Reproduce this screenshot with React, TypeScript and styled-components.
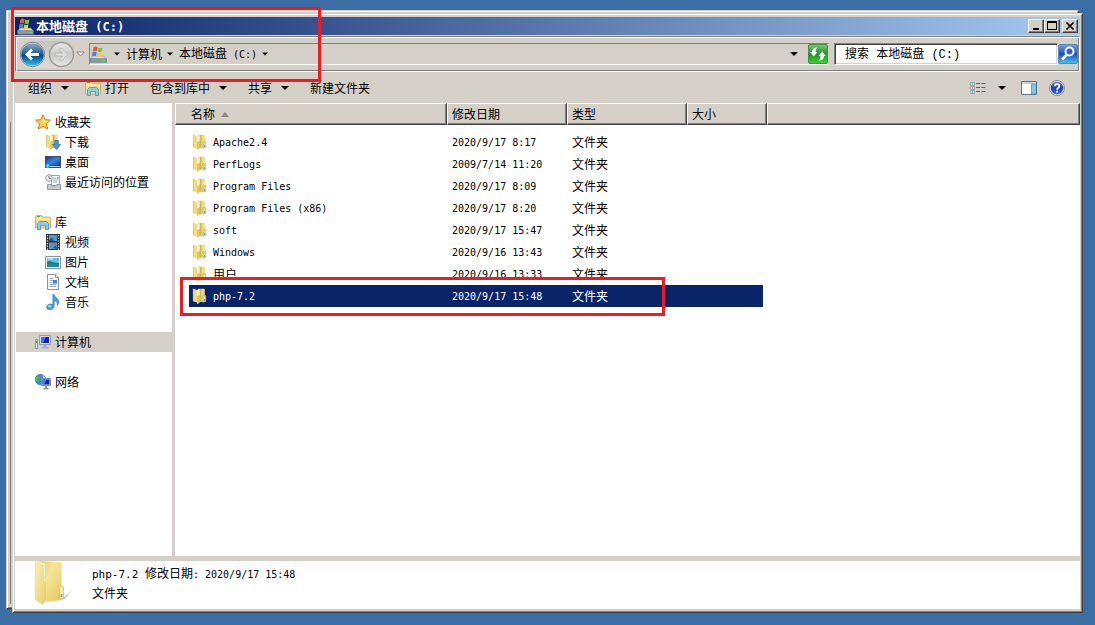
import React from "react";
import styled, { createGlobalStyle, css } from "styled-components";

const FACE = "#d4d0c8";
const NAVY = "#0a246a";
const MARK = "#ed1c24";

const GlobalStyle = createGlobalStyle`
  * { box-sizing: border-box; }
  body {
    margin: 0;
    background: #3a6ea5;
    color: #000;
    font: 12px/20px "Noto Sans CJK SC", sans-serif;
  }
  button, input {
    font: inherit;
    color: inherit;
    border: 0;
    padding: 0;
    margin: 0;
    background: none;
    border-radius: 0;
  }
  svg { display: block; flex: none; }
`;

const raised = css`
  border: 1px solid;
  border-color: #fff #404040 #404040 #fff;
  box-shadow: inset -1px -1px #808080;
`;

const Desktop = styled.div`
  position: relative;
  height: 100vh;
  min-height: 480px;
  padding: 13px 12px 12px;
  display: flex;
`;

const BackWindow = styled.div`
  position: absolute;
  inset: 10px 16px 16px 6px;
  background: ${FACE};
  border: 1px solid;
  border-color: ${FACE} #404040 #404040 ${FACE};
  box-shadow: inset 1px 1px #fff, inset -1px -1px #808080;
  &::before {
    content: "";
    position: absolute;
    left: 3px;
    top: 111px;
    bottom: 4px;
    border-left: 1px solid #808080;
  }
`;

const Window = styled.main`
  position: relative;
  flex: 1;
  min-width: 0;
  display: flex;
  flex-direction: column;
  padding: 3px 2px;
  background: ${FACE};
  border: 1px solid;
  border-color: ${FACE} #404040 #404040 ${FACE};
  box-shadow: inset 1px 1px #fff, inset -1px -1px #808080;
`;

const TitleBar = styled.header`
  height: 18px;
  flex: none;
  display: flex;
  align-items: center;
  gap: 2px;
  padding: 0 2px;
  background: linear-gradient(90deg, ${NAVY}, #a6caf0);
  color: #fff;
`;

const Title = styled.h1`
  flex: 1;
  margin: 0;
  font-size: 13px;
  line-height: 18px;
  font-weight: 700;
`;

const Latin = styled.span<{ $size?: number }>`
  font-family: "DejaVu Sans Mono", monospace;
  font-size: ${(p) => p.$size ?? 10}px;
  white-space: pre;
`;

const CaptionButtons = styled.div`
  display: flex;
`;

const CaptionButton = styled.button<{ $apart?: boolean }>`
  ${raised}
  width: 16px;
  height: 14px;
  display: grid;
  place-items: center;
  background: ${FACE};
  margin-left: ${(p) => (p.$apart ? 2 : 0)}px;
`;

const NavBar = styled.nav`
  flex: none;
  height: 36px;
  margin-top: 1px;
  display: flex;
  align-items: center;
  padding-left: 3px;
  border: 1px solid #808080;
  border-right-color: #fff;
  border-bottom-color: #fff;
  box-shadow: inset 1px 1px #fff, inset -1px -1px #808080;
`;

const HistoryButtons = styled.div`
  display: flex;
  align-items: center;
  gap: 2px;
  border-radius: 14px;
  background: linear-gradient(#c6c4bd, #dedbd4);
`;

const PlainButton = styled.button`
  display: flex;
  align-items: center;
  flex: none;
`;

const HistoryMenu = styled(PlainButton)`
  margin: 0 4px 0 1px;
`;

const AddressBar = styled.div`
  flex: 1;
  min-width: 0;
  height: 22px;
  display: flex;
  align-items: center;
  border: 1px solid;
  border-color: #808080 ${FACE} #fff #808080;
`;

const Crumbs = styled.ol`
  flex: 1;
  display: flex;
  align-items: center;
  gap: 6px;
  margin: 0;
  padding: 0 0 0 7px;
  list-style: none;
  li {
    display: flex;
    align-items: center;
    gap: 5px;
  }
`;

const AddressMenu = styled(PlainButton)`
  margin-right: 10px;
`;

const SearchBox = styled.form`
  width: 244px;
  margin: 0 1px 0 5px;
  display: flex;
  align-items: center;
`;

const SearchInput = styled.input`
  flex: 1;
  min-width: 0;
  height: 22px;
  padding: 2px 10px 0;
  background: #fff;
  border: 1px solid;
  border-color: #808080 #fff #fff #808080;
  box-shadow: inset 1px 1px #404040, inset -1px -1px ${FACE};
  font-family: "Liberation Mono", "Noto Sans CJK SC", monospace;
  &::placeholder {
    color: #000;
    opacity: 1;
  }
`;

const Toolbar = styled.div`
  flex: none;
  height: 31px;
  display: flex;
  align-items: center;
  justify-content: space-between;
  padding: 0 15px 0 13px;
`;

const ToolGroup = styled.div<{ $gap: number }>`
  display: flex;
  align-items: center;
  gap: ${(p) => p.$gap}px;
`;

const ToolButton = styled(PlainButton)<{ $gap?: number }>`
  gap: ${(p) => p.$gap ?? 9}px;
`;

const Body = styled.div`
  flex: 1;
  min-height: 0;
  display: flex;
  gap: 3px;
`;

const Sidebar = styled.aside`
  flex: none;
  width: 157px;
  padding: 9px 0 0 1px;
  background: #fff;
  display: flex;
  flex-direction: column;
  gap: 20px;
  overflow: hidden;
`;

const TreeGroup = styled.div``;

const TreeLink = styled.a<{ $child?: boolean; $active?: boolean }>`
  display: flex;
  align-items: center;
  gap: 4px;
  height: 20px;
  padding-left: ${(p) => (p.$child ? 29 : 19)}px;
  background: ${(p) => (p.$active ? FACE : "transparent")};
  color: inherit;
  text-decoration: none;
`;

const FilePane = styled.section`
  flex: 1;
  min-width: 0;
  background: #fff;
  overflow: hidden;
`;

const FileTable = styled.table`
  width: 100%;
  table-layout: fixed;
  border-collapse: separate;
  border-spacing: 0;
  tbody::before {
    content: "";
    display: table-row;
    height: 6px;
  }
`;

const HeadCell = styled.th<{ $w?: number; $first?: boolean }>`
  ${raised}
  width: ${(p) => (p.$w ? p.$w + "px" : "auto")};
  height: 22px;
  padding: 0 0 0 ${(p) => (p.$first ? 15 : 4)}px;
  background: ${FACE};
  font-weight: 400;
  text-align: left;
  line-height: 18px;
`;

const SortButton = styled(PlainButton)`
  gap: 6px;
  height: 18px;
`;

const FileRow = styled.tr<{ $selected?: boolean }>`
  td {
    height: 22px;
    padding: 0 0 0 5px;
    white-space: nowrap;
    background-clip: padding-box;
    background-color: ${(p) => (p.$selected ? NAVY : "transparent")};
    color: ${(p) => (p.$selected ? "#fff" : "#000")};
  }
  td:first-child {
    border-left: 14px solid transparent;
    padding-left: 3px;
  }
  td:nth-child(4) {
    border-right: 4px solid transparent;
  }
  td:last-child {
    background: none;
  }
`;

const FileName = styled.div`
  display: flex;
  align-items: center;
  gap: 5px;
`;

const Details = styled.footer`
  flex: none;
  height: 48px;
  margin-top: 5px;
  padding-left: 20px;
  display: flex;
  gap: 19px;
  background: #fff;
`;

const DetailText = styled.div`
  padding-top: 3px;
  line-height: 18px;
  p { margin: 0; }
`;

const Highlight = styled.div<{ $x: number; $y: number; $w: number; $h: number }>`
  position: absolute;
  left: ${(p) => p.$x}px;
  top: ${(p) => p.$y}px;
  width: ${(p) => p.$w}px;
  height: ${(p) => p.$h}px;
  border: 3px solid ${MARK};
  pointer-events: none;
`;

const Caret = ({ size = 8 }: { size?: number }) => (
  <svg width={size} height="8" viewBox={`0 0 ${size} 8`} aria-hidden="true">
    <path d={size === 6 ? "M0 2.500H6L3 5.500Z" : "M0 2H8L4 6Z"} fill="#000" />
  </svg>
);

const DriveIcon = () => (
  <svg width="17" height="17" viewBox="0 0 16 16">
    <path d="M3 9.500h10l2.500 3H.5z" fill="#d5dde2" stroke="#8b9aa4" strokeWidth=".6" />
    <path d="M.5 12h15v3.300H.5z" fill="#8d9da8" stroke="#62727d" strokeWidth=".6" />
    <path d="M11.500 13h2.500v1.200h-2.500z" fill="#49e34d" />
    <path d="M3.300 1.200C4.800.2 6 .3 7.200 1L6.500 4.900C5.200 4.200 4 4.200 2.600 5z" fill="#ee5a2c" />
    <path d="M7.800 1.300c1.300.8 2.500.8 4 .1L11 5.300c-1.300.6-2.500.6-3.900-.2z" fill="#84bd3a" />
    <path d="M2.400 5.700c1.400-.8 2.600-.7 3.900 0l-.7 4c-1.300-.7-2.500-.7-3.900.1z" fill="#3f86dc" />
    <path d="M6.900 6c1.400.8 2.600.8 3.900.2l-.8 4c-1.300.6-2.500.5-3.800-.2z" fill="#fdc92d" />
  </svg>
);

const BackIcon = () => (
  <svg width="27" height="27" viewBox="0 0 27 27">
    <defs>
      <linearGradient id="back" x2="0" y2="1">
        <stop offset="0" stopColor="#8fa9c4" />
        <stop offset=".46" stopColor="#2a5f96" />
        <stop offset=".54" stopColor="#06477f" />
        <stop offset="1" stopColor="#2cc4f5" />
      </linearGradient>
    </defs>
    <circle cx="13.500" cy="13.500" r="12.200" fill="#e8eef2" stroke="#7d8790" />
    <circle cx="13.500" cy="13.500" r="11.300" fill="url(#back)" />
    <path d="M20 13.500H8.500M13 8.500l-5 5 5 5" fill="none" stroke="#fff" strokeWidth="2.800" />
  </svg>
);

const ForwardIcon = () => (
  <svg width="27" height="27" viewBox="0 0 27 27">
    <defs>
      <linearGradient id="fwd" x2="0" y2="1">
        <stop offset="0" stopColor="#e8e7e4" />
        <stop offset=".5" stopColor="#cbc9c5" />
        <stop offset="1" stopColor="#e9e8e4" />
      </linearGradient>
    </defs>
    <circle cx="13.500" cy="13.500" r="12" fill="url(#fwd)" stroke="#9a9a98" strokeWidth="1.500" />
    <path d="M7 12h7.500L11 8.500 13.500 7l6.500 6.500-6.500 6.500-2.500-1.500 3.500-3.500H7z" fill="#dddcd8" stroke="#b3b2af" strokeWidth=".8" />
  </svg>
);

const RefreshIcon = () => (
  <svg width="20" height="20" viewBox="0 0 20 20">
    <defs>
      <linearGradient id="ref" x2="0" y2="1">
        <stop offset="0" stopColor="#7cc77a" />
        <stop offset=".5" stopColor="#18961c" />
        <stop offset="1" stopColor="#3fd23a" />
      </linearGradient>
    </defs>
    <rect x=".5" y=".5" width="19" height="19" rx="1.500" fill="url(#ref)" stroke="#4c8d50" />
    <path d="M9.500 3.500C6 3.500 4 5 4 8H2l3.800 4.500L9.500 8h-2c0-2 .5-3.500 2-4.500z" fill="#fff" />
    <path d="M10.500 16.500c3.500 0 5.500-1.500 5.500-4.500h2l-3.800-4.500L10.500 12h2c0 2-.5 3.500-2 4.500z" fill="#fff" />
  </svg>
);

const SearchIcon = () => (
  <svg width="20" height="20" viewBox="0 0 20 20">
    <defs>
      <linearGradient id="sea" x2="0" y2="1">
        <stop offset="0" stopColor="#7a9fe4" />
        <stop offset=".5" stopColor="#1d4fc4" />
        <stop offset="1" stopColor="#45c6f6" />
      </linearGradient>
    </defs>
    <rect x=".5" y=".5" width="19" height="19" rx="1.500" fill="url(#sea)" stroke="#5f84b8" />
    <circle cx="11.500" cy="7.500" r="4" fill="#2c63cc" stroke="#fff" strokeWidth="2" />
    <path d="M8.500 11 4 15.500" stroke="#fff" strokeWidth="2.600" />
  </svg>
);

const LibraryIcon = () => (
  <svg width="16" height="16" viewBox="0 0 16 16">
    <path d="M.5 14V2.500L1.500 1.500h5l1 1.500h7l1 1V14z" fill="#f5dc83" stroke="#c9a64a" strokeWidth=".8" />
    <path d="M2 2.500h3" stroke="#4aa84a" />
    <path d="M1.500 5h13" stroke="#fff5c8" />
    <path d="M2.500 15.500V9.500L4.500 7.500h7l2 2v6h-3v-4h-5v4z" fill="#85cdf1" stroke="#3d93c5" strokeWidth=".8" />
  </svg>
);

const StarIcon = () => (
  <svg width="16" height="16" viewBox="0 0 16 16">
    <path d="m8 .8 2.100 4.900 5.300.4-4 3.600 1.300 5.400L8 12.300l-4.700 2.800 1.300-5.400-4-3.600 5.300-.4z" fill="#ffd04a" stroke="#e27a1e" strokeLinejoin="round" />
    <path d="M8 3 9.500 6.800 13 7 8 9z" fill="#fff0a8" />
  </svg>
);

const FolderArt = () => (
  <>
    <path d="M6 .8h6.500v12.500L6 14.500z" fill="#e8cc62" />
    <path d="M10 1h2.500v12.200l-2.500.5z" fill="#f2dd86" />
    <path d="M10.800 7.500h3v6l-3 .8z" fill="#edd37a" stroke="#cda63f" strokeWidth=".5" />
    <path d="M1 .6 5 2v12.500l-4-1.300z" fill="#f1dc84" />
    <path d="M1.300 1v12" stroke="#e0c25c" strokeWidth=".7" />
    <path d="M5 2 8 1v12.500L5.800 16 5 15z" fill="#fbf3cd" />
    <path d="M5 8l3-1v6.500L5.800 16 5 15z" fill="#e3c862" />
    <path d="M8.200 1v12.500" stroke="#c09f45" strokeWidth=".7" />
    <path d="M12.500 9v2" stroke="#fff" strokeWidth=".9" />
    <path d="M12.500 11v2" stroke="#3f9fc4" strokeWidth=".9" />
  </>
);

const FolderIcon = () => (
  <svg width="16" height="16" viewBox="0 0 16 16">
    <FolderArt />
  </svg>
);

const DownloadIcon = () => (
  <svg width="16" height="16" viewBox="0 0 16 16">
    <FolderArt />
    <path d="M9.800 6.500h3.400v4h2.300L11.500 15.500 7.500 10.500h2.300z" fill="#3b9be8" stroke="#1c67b3" strokeWidth=".7" />
  </svg>
);

const DesktopIcon = () => (
  <svg width="16" height="16" viewBox="0 0 16 16">
    <defs>
      <linearGradient id="desk" x2="1" y2="1">
        <stop offset="0" stopColor="#123a8c" />
        <stop offset=".5" stopColor="#3f82d8" />
        <stop offset="1" stopColor="#123f91" />
      </linearGradient>
    </defs>
    <path d="M0 2h16v12H0z" fill="#34506f" />
    <path d="M1 3h14v8.500H1z" fill="url(#desk)" />
    <path d="M3.500 12.500H15" stroke="#a8c6df" />
    <circle cx="2.500" cy="12" r="2" fill="#4ec1ee" />
    <path d="M2 11h1v2H2z" fill="#f6a42f" />
  </svg>
);

const RecentIcon = () => (
  <svg width="16" height="16" viewBox="0 0 16 16">
    <path d="M6.500 1.500h8v10h-8z" fill="#fff" stroke="#9aa4ac" />
    <path d="M8 4h3M8 6h5M8 8h4" stroke="#78aee0" />
    <path d="M12 3h1.500v2H12z" fill="#6a9fca" />
    <path d="M2.500 10.500h4l1 1.500h3l1-1.500h4v5h-13z" fill="#c4cbd1" stroke="#7e8b95" strokeWidth=".8" />
    <circle cx="4" cy="4" r="3.300" fill="#eef2f5" stroke="#8f9ba4" />
    <path d="M4 2v2.300h1.800" fill="none" stroke="#556575" strokeWidth=".9" />
  </svg>
);

const VideoIcon = () => (
  <svg width="16" height="16" viewBox="0 0 16 16">
    <path d="M1 0h14v16H1z" fill="#2c3338" />
    <path d="M4 1h8v6H4zM4 8.500h8V15H4z" fill="#4b9bd8" />
    <path d="M6 3h3v3H6zM7 9h4v2l-3 1z" fill="#d0643f" />
    <path d="M4 6 7 4l2 3H4zM8 14l3-3 1 4z" fill="#25527f" />
    <path d="M2.500 1v15M13.500 1v15" stroke="#fff" strokeWidth="1.200" strokeDasharray="1.200 1.500" />
  </svg>
);

const PictureIcon = () => (
  <svg width="16" height="16" viewBox="0 0 16 16">
    <path d="M.5 2.500h15v12H.5z" fill="#fff" stroke="#8a959e" />
    <path d="M2 4h12v9H2z" fill="#69bdec" />
    <path d="M2 7.500C5 5.500 6.500 9 14 9v1.500H2z" fill="#257f63" />
    <path d="M2 10h12v3H2z" fill="#1a86b4" />
    <path d="M3 5h5" stroke="#e5f6ff" />
  </svg>
);

const DocumentIcon = () => (
  <svg width="16" height="16" viewBox="0 0 16 16">
    <path d="M2.500.5h8l3 3v12h-11z" fill="#fff" stroke="#8994a0" />
    <path d="M10.500.5v3h3" fill="#dce4ea" stroke="#8994a0" />
    <path d="M4.500 4.500h4M4.500 6.500h4M4.500 8.500h3M4.500 10.500h7M4.500 12.500h7" stroke="#97a8ce" />
    <path d="M8 6h4v3.500H8z" fill="#3f86c9" />
  </svg>
);

const MusicIcon = () => (
  <svg width="16" height="16" viewBox="0 0 16 16">
    <path d="M7.800.3H9C9.300 3.300 13.800 4 13.800 8c0 1.500-.6 2.500-1.600 3.500.5-2.800-.7-4.300-3-4.900v6C9.200 14.300 7.200 15.800 4.700 15.800 2.700 15.800 1.500 14.800 1.500 13.300c0-2 2.200-3.600 5-3.200.5 0 .9.100 1.300.3z" fill="#3f9fe2" stroke="#2671b4" strokeWidth=".5" />
    <ellipse cx="4.800" cy="12.300" rx="1.800" ry="1" fill="#b6e2fb" />
  </svg>
);

const Monitor = () => (
  <>
    <path d="M4.500 1.500h11v9h-11z" fill="#cfd8e4" stroke="#8e9cb0" />
    <path d="M6 3h8v6H6z" fill="#0d22b0" />
    <path d="M6 3h5L8 9H6z" fill="#4a72e8" />
    <path d="M8.500 11h3v2h2v1.500h-7V13h2z" fill="#a2adba" />
  </>
);

const ComputerIcon = () => (
  <svg width="16" height="16" viewBox="0 0 16 16">
    <Monitor />
    <path d="M.5 5.500h2v9h-2z" fill="#e5e8ea" stroke="#7f8a92" strokeWidth=".8" />
    <path d="M1 7h1v2H1z" fill="#3abf42" />
  </svg>
);

const NetworkIcon = () => (
  <svg width="16" height="16" viewBox="0 0 16 16">
    <circle cx="5.500" cy="5.500" r="5.300" fill="#2f86dd" stroke="#2465a8" strokeWidth=".5" />
    <path d="M1 3.500C3 1 4.500 3 6 2.500 5.500 5 3 5 3.500 7.500 4 9 2 9 1 7z" fill="#48ba45" />
    <path d="M7.500 1c2 1 2.500 2 3 4L8 4.500z" fill="#bfe6f8" />
    <path d="M6.500 4.500h9v7h-9z" fill="#cfd8e4" stroke="#7f8fa6" />
    <path d="M7.500 5.500h7v5h-7z" fill="#0d22b0" />
    <path d="M7.500 5.500h4l-2 5h-2z" fill="#4a72e8" />
    <path d="M10 12h2v2h1.500v1.500h-5V14H10z" fill="#8a97a8" />
  </svg>
);

const ViewIcon = () => (
  <svg width="16" height="14" viewBox="0 0 16 14">
    {["#3fa13f", "#d0312d", "#2d63c8"].map((c, i) => (
      <g key={c} transform={`translate(0 ${i * 4})`}>
        <path d="M.5 1.500h4v3h-4z" fill="#fff" stroke="#8593a5" strokeWidth=".8" />
        <path d="M1.800 2.300h1.400v1.400H1.800z" fill={c} />
        <path d="M6 2.500h4M11.500 2.500h4" stroke="#53657d" />
      </g>
    ))}
  </svg>
);

const PaneIcon = () => (
  <svg width="16" height="14" viewBox="0 0 16 14">
    <path d="M.5.5h15v13H.5z" fill="#fff" stroke="#5c7494" />
    <path d="M1 1h14v2H1z" fill="#c5d2e2" />
    <path d="M10.500 3h4.500v10h-4.500z" fill="#7ccbe8" stroke="#4b8fb3" strokeWidth=".7" />
  </svg>
);

const HelpIcon = () => (
  <svg width="16" height="16" viewBox="0 0 16 16">
    <defs>
      <linearGradient id="help" x2="0" y2="1">
        <stop offset="0" stopColor="#5f84d8" />
        <stop offset=".5" stopColor="#1d3fa6" />
        <stop offset="1" stopColor="#3d72d6" />
      </linearGradient>
    </defs>
    <circle cx="8" cy="8" r="7.500" fill="#d8dce2" stroke="#8c929b" />
    <circle cx="8" cy="8" r="6.200" fill="url(#help)" />
    <path d="M5.800 6.300C5.800 3.400 10.300 3.500 10.300 6.200 10.300 7.800 8.100 7.700 8.100 9.700" fill="none" stroke="#fff" strokeWidth="1.700" />
    <path d="M7.200 10.800h1.800v1.700H7.200z" fill="#fff" />
  </svg>
);

const BigFolder = () => (
  <svg width="38" height="44" viewBox="0 0 38 44">
    <defs>
      <linearGradient id="bigA" x2="1" y2="1">
        <stop offset="0" stopColor="#fbf0b4" />
        <stop offset="1" stopColor="#ebcd68" />
      </linearGradient>
      <linearGradient id="bigB" x2="1" y2="1">
        <stop offset="0" stopColor="#e3c55c" />
        <stop offset=".4" stopColor="#f6e59b" />
        <stop offset="1" stopColor="#e6c65c" />
      </linearGradient>
      <linearGradient id="bigS" x2="1">
        <stop offset="0" stopColor="#666" stopOpacity=".55" />
        <stop offset="1" stopColor="#999" stopOpacity="0" />
      </linearGradient>
    </defs>
    <path d="M26 39 38 27v3l-8 8z" fill="url(#bigS)" />
    <path d="M2 0l24.500 1v38L9 41z" fill="url(#bigB)" />
    <path d="M24.500 38V28c0-4 4-4 4-1.500V37z" fill="#f3de8b" stroke="#d8bd5c" strokeWidth=".7" />
    <path d="M26.500 26.500v7" stroke="#fff" strokeWidth="1.800" />
    <path d="M26.500 33v3" stroke="#58b3cf" strokeWidth="1.500" />
    <path d="M.5 0 9.500 3.500 10.500 5v34L8 43.500.5 39z" fill="url(#bigA)" stroke="#e2c870" strokeWidth=".5" />
    <path d="M2 .5 9.500 3.500V20" fill="none" stroke="#fffbe2" strokeWidth="1.200" />
  </svg>
);

type Leaf = { label: string; icon: React.ReactNode; child?: boolean; active?: boolean };

const tree: Leaf[][] = [
  [
    { label: "收藏夹", icon: <StarIcon /> },
    { label: "下载", icon: <DownloadIcon />, child: true },
    { label: "桌面", icon: <DesktopIcon />, child: true },
    { label: "最近访问的位置", icon: <RecentIcon />, child: true },
  ],
  [
    { label: "库", icon: <LibraryIcon /> },
    { label: "视频", icon: <VideoIcon />, child: true },
    { label: "图片", icon: <PictureIcon />, child: true },
    { label: "文档", icon: <DocumentIcon />, child: true },
    { label: "音乐", icon: <MusicIcon />, child: true },
  ],
  [{ label: "计算机", icon: <ComputerIcon />, active: true }],
  [{ label: "网络", icon: <NetworkIcon /> }],
];

const files = [
  ["Apache2.4", "2020/9/17 8:17"],
  ["PerfLogs", "2009/7/14 11:20"],
  ["Program Files", "2020/9/17 8:09"],
  ["Program Files (x86)", "2020/9/17 8:20"],
  ["soft", "2020/9/17 15:47"],
  ["Windows", "2020/9/16 13:43"],
  ["用户", "2020/9/16 13:33"],
  ["php-7.2", "2020/9/17 15:48"],
];

const isLatin = (s: string) => /^[\x20-\x7e]+$/.test(s);

export default function App() {
  return (
    <Desktop>
      <GlobalStyle />
      <BackWindow />
      <Window>
        <TitleBar>
          <DriveIcon />
          <Title>
            本地磁盘<Latin $size={12}> (C:)</Latin>
          </Title>
          <CaptionButtons>
            <CaptionButton aria-label="最小化">
              <svg width="10" height="10" viewBox="0 0 10 10"><path d="M2 7h6v2H2z" /></svg>
            </CaptionButton>
            <CaptionButton aria-label="最大化">
              <svg width="10" height="10" viewBox="0 0 10 10"><path d="M0 0h10v9H0zM1 2v6h8V2z" fillRule="evenodd" /></svg>
            </CaptionButton>
            <CaptionButton $apart aria-label="关闭">
              <svg width="10" height="10" viewBox="0 0 10 10"><path d="m1.500 1.500 7 7m0-7-7 7" stroke="#000" strokeWidth="1.700" /></svg>
            </CaptionButton>
          </CaptionButtons>
        </TitleBar>

        <NavBar>
          <HistoryButtons>
            <PlainButton aria-label="后退"><BackIcon /></PlainButton>
            <PlainButton aria-label="前进"><ForwardIcon /></PlainButton>
          </HistoryButtons>
          <HistoryMenu aria-label="最近的页面">
            <svg width="9" height="8" viewBox="0 0 9 8"><path d="M.8 2h7.400L4.500 6z" fill="#fff" stroke="#777" strokeWidth=".9" /></svg>
          </HistoryMenu>
          <AddressBar>
            <DriveIcon />
            <Crumbs>
              <li><Caret size={6} /></li>
              <li>计算机<Caret size={6} /></li>
              <li>
                <span>本地磁盘<Latin> (C:)</Latin></span>
                <Caret size={6} />
              </li>
            </Crumbs>
            <AddressMenu aria-label="以前的位置"><Caret /></AddressMenu>
            <PlainButton aria-label="刷新"><RefreshIcon /></PlainButton>
          </AddressBar>
          <SearchBox>
            <SearchInput aria-label="搜索" placeholder="搜索 本地磁盘 (C:)" />
            <PlainButton type="button" aria-label="开始搜索"><SearchIcon /></PlainButton>
          </SearchBox>
        </NavBar>

        <Toolbar>
          <ToolGroup $gap={21}>
            <ToolGroup $gap={16}>
              <ToolButton>组织<Caret /></ToolButton>
              <ToolButton $gap={4}><LibraryIcon />打开</ToolButton>
            </ToolGroup>
            <ToolButton>包含到库中<Caret /></ToolButton>
            <ToolButton>共享<Caret /></ToolButton>
            <ToolButton>新建文件夹</ToolButton>
          </ToolGroup>
          <ToolGroup $gap={15}>
            <ToolButton $gap={12} aria-label="更改视图"><ViewIcon /><Caret /></ToolButton>
            <ToolGroup $gap={12}>
              <ToolButton aria-label="预览窗格"><PaneIcon /></ToolButton>
              <ToolButton aria-label="帮助"><HelpIcon /></ToolButton>
            </ToolGroup>
          </ToolGroup>
        </Toolbar>

        <Body>
          <Sidebar>
            {tree.map((group, i) => (
              <TreeGroup key={i}>
                {group.map((leaf) => (
                  <TreeLink key={leaf.label} href="#" $child={leaf.child} $active={leaf.active}>
                    {leaf.icon}
                    {leaf.label}
                  </TreeLink>
                ))}
              </TreeGroup>
            ))}
          </Sidebar>
          <FilePane>
            <FileTable>
              <thead>
                <tr>
                  <HeadCell $w={272} $first>
                    <SortButton>
                      名称
                      <svg width="8" height="5" viewBox="0 0 8 5"><path d="M0 5 4 0l4 5z" fill="#8c8a85" /></svg>
                    </SortButton>
                  </HeadCell>
                  <HeadCell $w={120}><SortButton>修改日期</SortButton></HeadCell>
                  <HeadCell $w={120}><SortButton>类型</SortButton></HeadCell>
                  <HeadCell $w={80}><SortButton>大小</SortButton></HeadCell>
                  <HeadCell />
                </tr>
              </thead>
              <tbody>
                {files.map(([name, date]) => (
                  <FileRow key={name} $selected={name === "php-7.2"}>
                    <td>
                      <FileName>
                        <FolderIcon />
                        <span>{isLatin(name) ? <Latin>{name}</Latin> : name}</span>
                      </FileName>
                    </td>
                    <td><Latin>{date}</Latin></td>
                    <td>文件夹</td>
                    <td />
                    <td />
                  </FileRow>
                ))}
              </tbody>
            </FileTable>
          </FilePane>
        </Body>

        <Details>
          <BigFolder />
          <DetailText>
            <p>
              <Latin $size={11}>php-7.2 </Latin>修改日期<Latin>: 2020/9/17 15:48</Latin>
            </p>
            <p>文件夹</p>
          </DetailText>
        </Details>
      </Window>
      <Highlight $x={11} $y={7} $w={310} $h={75} />
      <Highlight $x={180} $y={277} $w={485} $h={39} />
    </Desktop>
  );
}
